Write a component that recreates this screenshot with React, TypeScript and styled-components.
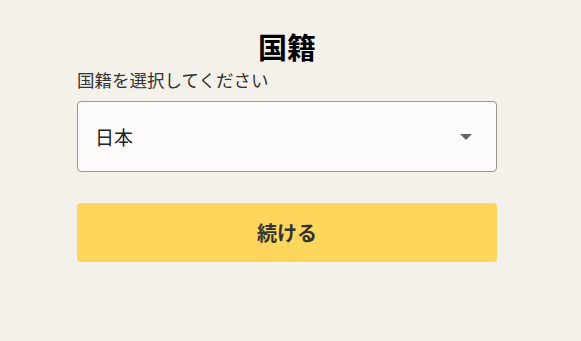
import styled, { createGlobalStyle } from 'styled-components';

const GlobalStyle = createGlobalStyle`
  html, body {
    margin: 0;
    padding: 0;
    background: #f4f1ea;
  }
  body {
    font-family: "Noto Sans CJK JP", "Noto Sans", sans-serif;
  }
`;

const Page = styled.div`
  display: flex;
  justify-content: center;
  padding: 26px 7px 0 0;
`;

const Form = styled.div`
  width: 420px;
  display: flex;
  flex-direction: column;
`;

const Title = styled.h1`
  margin: 0;
  text-align: center;
  font-size: 29px;
  font-weight: 700;
  line-height: 40px;
  color: #000;
`;

const Label = styled.label`
  font-size: 17.5px;
  line-height: 24px;
  color: #333;
  margin: 2px 0 9px;
`;

const Select = styled.div`
  height: 71px;
  box-sizing: border-box;
  border: 1px solid #9a968f;
  border-radius: 4px;
  background: #fcfbf9;
  display: flex;
  align-items: center;
  justify-content: space-between;
  padding: 0 24px 0 17px;
  font-size: 19px;
  color: #222;
`;

const Arrow = styled.span`
  width: 0;
  height: 0;
  border-left: 6px solid transparent;
  border-right: 6px solid transparent;
  border-top: 6px solid #666;
`;

const Button = styled.button`
  margin-top: 31px;
  height: 59px;
  border: 0;
  border-radius: 4px;
  background: #fdd65b;
  font-family: inherit;
  font-size: 20px;
  font-weight: 700;
  color: #333;
  cursor: pointer;
`;

export default function App() {
  return (
    <>
      <GlobalStyle />
      <Page>
        <Form>
          <Title>国籍</Title>
          <Label>国籍を選択してください</Label>
          <Select>
            <span>日本</span>
            <Arrow />
          </Select>
          <Button>続ける</Button>
        </Form>
      </Page>
    </>
  );
}
